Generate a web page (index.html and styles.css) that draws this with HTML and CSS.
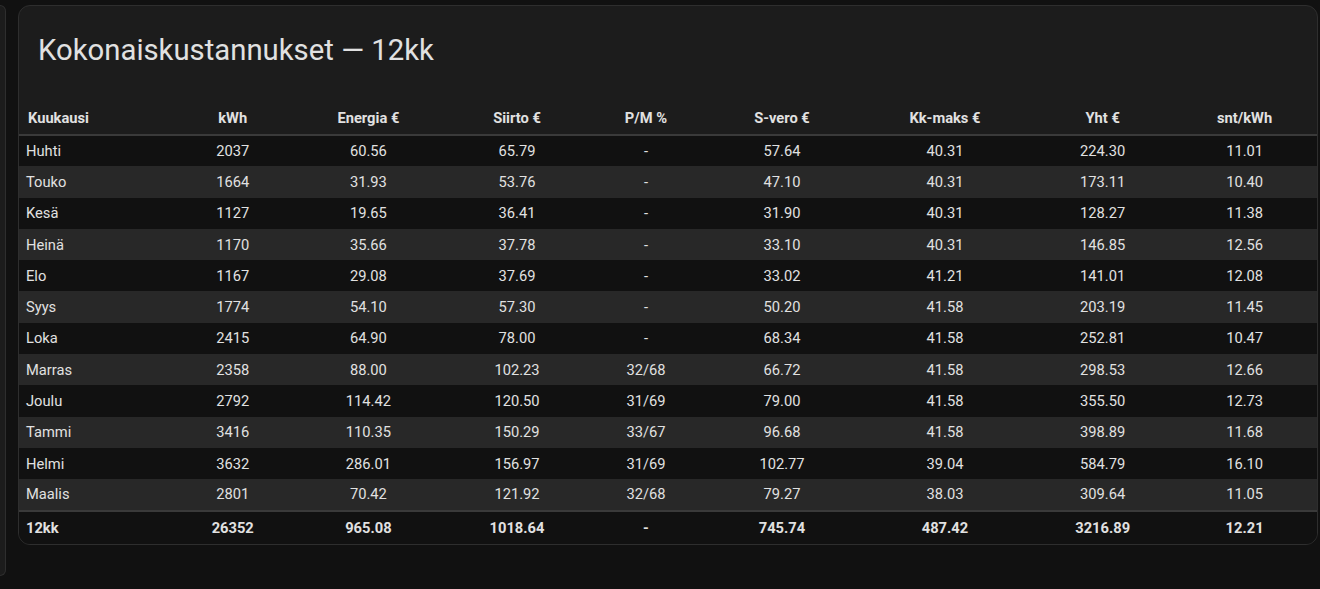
FILE: index.html
```html
<!DOCTYPE html>
<html lang="fi">
<head>
<meta charset="utf-8">
<title>Kokonaiskustannukset</title>
<link rel="stylesheet" href="styles.css">
</head>
<body>
<div class="page">
  <div class="side-card"></div>
  <section class="card">
    <h1 class="card-title">Kokonaiskustannukset — 12kk</h1>
    <table class="costs">
      <colgroup>
        <col class="c-month"><col class="c-kwh"><col class="c-energy"><col class="c-transfer"><col class="c-pm"><col class="c-tax"><col class="c-fee"><col class="c-total"><col class="c-cent">
      </colgroup>
      <thead>
        <tr><th class="left">Kuukausi</th><th>kWh</th><th>Energia €</th><th>Siirto €</th><th>P/M %</th><th>S-vero €</th><th>Kk-maks €</th><th>Yht €</th><th>snt/kWh</th></tr>
      </thead>
      <tbody>
        <tr><td class="left">Huhti</td><td>2037</td><td>60.56</td><td>65.79</td><td>-</td><td>57.64</td><td>40.31</td><td>224.30</td><td>11.01</td></tr>
        <tr><td class="left">Touko</td><td>1664</td><td>31.93</td><td>53.76</td><td>-</td><td>47.10</td><td>40.31</td><td>173.11</td><td>10.40</td></tr>
        <tr><td class="left">Kesä</td><td>1127</td><td>19.65</td><td>36.41</td><td>-</td><td>31.90</td><td>40.31</td><td>128.27</td><td>11.38</td></tr>
        <tr><td class="left">Heinä</td><td>1170</td><td>35.66</td><td>37.78</td><td>-</td><td>33.10</td><td>40.31</td><td>146.85</td><td>12.56</td></tr>
        <tr><td class="left">Elo</td><td>1167</td><td>29.08</td><td>37.69</td><td>-</td><td>33.02</td><td>41.21</td><td>141.01</td><td>12.08</td></tr>
        <tr><td class="left">Syys</td><td>1774</td><td>54.10</td><td>57.30</td><td>-</td><td>50.20</td><td>41.58</td><td>203.19</td><td>11.45</td></tr>
        <tr><td class="left">Loka</td><td>2415</td><td>64.90</td><td>78.00</td><td>-</td><td>68.34</td><td>41.58</td><td>252.81</td><td>10.47</td></tr>
        <tr><td class="left">Marras</td><td>2358</td><td>88.00</td><td>102.23</td><td>32/68</td><td>66.72</td><td>41.58</td><td>298.53</td><td>12.66</td></tr>
        <tr><td class="left">Joulu</td><td>2792</td><td>114.42</td><td>120.50</td><td>31/69</td><td>79.00</td><td>41.58</td><td>355.50</td><td>12.73</td></tr>
        <tr><td class="left">Tammi</td><td>3416</td><td>110.35</td><td>150.29</td><td>33/67</td><td>96.68</td><td>41.58</td><td>398.89</td><td>11.68</td></tr>
        <tr><td class="left">Helmi</td><td>3632</td><td>286.01</td><td>156.97</td><td>31/69</td><td>102.77</td><td>39.04</td><td>584.79</td><td>16.10</td></tr>
        <tr><td class="left">Maalis</td><td>2801</td><td>70.42</td><td>121.92</td><td>32/68</td><td>79.27</td><td>38.03</td><td>309.64</td><td>11.05</td></tr>
      </tbody>
      <tfoot>
        <tr><td class="left">12kk</td><td>26352</td><td>965.08</td><td>1018.64</td><td>-</td><td>745.74</td><td>487.42</td><td>3216.89</td><td>12.21</td></tr>
      </tfoot>
    </table>
  </section>
</div>
</body>
</html>
```

FILE: styles.css
```css
* { box-sizing: border-box; }
html, body {
  margin: 0;
  background: #111111;
  font-family: Roboto, "Liberation Sans", sans-serif;
  color: #e1e1e1;
}
.page {
  display: flex;
  align-items: flex-start;
  gap: 12px;
  padding-top: 5px;
}
.side-card {
  flex: 0 0 6px;
  height: 571px;
  background: #1c1c1c;
  border: 1px solid #2e2e2e;
  border-left: none;
  border-radius: 0 12px 12px 0;
}
.card {
  flex: 0 0 1300px;
  height: 540px;
  background: #1c1c1c;
  border: 1px solid #2e2e2e;
  border-radius: 12px;
  overflow: hidden;
}
.card-title {
  margin: 0;
  padding: 24px 20px 0 19px;
  font-size: 29.3px;
  font-weight: 400;
  line-height: 40px;
  color: #e1e1e1;
}
.costs {
  margin-top: 32px;
  width: 1298px;
  border-collapse: collapse;
  table-layout: fixed;
  font-size: 14.7px;
}
.c-month { width: 158.8px; }
.c-kwh { width: 109.8px; }
.c-energy { width: 161.6px; }
.c-transfer { width: 135.6px; }
.c-pm { width: 122.4px; }
.c-tax { width: 149.6px; }
.c-fee { width: 176.4px; }
.c-total { width: 139px; }
.c-cent { width: 144.8px; }
.costs th, .costs td {
  text-align: center;
  padding: 0 4px;
  white-space: nowrap;
}
.costs th {
  height: 33px;
  font-weight: 700;
  border-bottom: 2px solid #3a3a3a;
}
.costs th.left { text-align: left; padding-left: 9px; }
.costs td.left { text-align: left; padding-left: 7px; }
.costs tbody td { height: 31.3px; }
.costs tbody tr:nth-child(odd) { background: #111111; }
.costs tbody tr:nth-child(even) { background: #282828; }
.costs tfoot td {
  height: 33px;
  font-weight: 700;
  background: #111111;
  border-top: 2px solid #3a3a3a;
}
```
